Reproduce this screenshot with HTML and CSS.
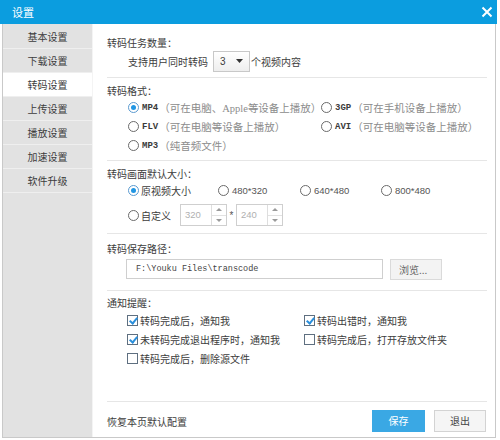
FILE: index.html
```html
<!DOCTYPE html>
<html lang="zh">
<head>
<meta charset="utf-8">
<title>设置</title>
<link rel="stylesheet" href="styles.css">
</head>
<body>
<div class="window">
  <div class="titlebar">
    <span class="title">设置</span>
    <svg class="close" width="12" height="12" viewBox="0 0 12 12"><path d="M1.5 1.5 L10.5 10.5 M10.5 1.5 L1.5 10.5" stroke="#fff" stroke-width="2" fill="none"/></svg>
  </div>
  <div class="frame">
    <ul class="sidebar">
      <li>基本设置</li>
      <li>下载设置</li>
      <li class="active">转码设置</li>
      <li>上传设置</li>
      <li>播放设置</li>
      <li>加速设置</li>
      <li>软件升级</li>
    </ul>
    <div class="content">
      <section class="sec s1">
        <div class="sec-title">转码任务数量：</div>
        <div class="task-row">
          <span>支持用户同时转码</span>
          <span class="select"><span class="sel-val">3</span><svg width="7" height="4" viewBox="0 0 7 4"><path d="M0 0 H7 L3.5 4 Z" fill="#333"/></svg></span>
          <span>个视频内容</span>
        </div>
      </section>

      <section class="sec s2">
        <div class="sec-title">转码格式：</div>
        <div class="fmt-grid">
          <label class="opt"><span class="radio checked"></span><span class="fmt">MP4</span><span class="desc">（可在电脑、<span class="latin">Apple</span>等设备上播放）</span></label>
          <label class="opt"><span class="radio"></span><span class="fmt">3GP</span><span class="desc">（可在手机设备上播放）</span></label>
          <label class="opt"><span class="radio"></span><span class="fmt">FLV</span><span class="desc">（可在电脑等设备上播放）</span></label>
          <label class="opt"><span class="radio"></span><span class="fmt">AVI</span><span class="desc">（可在电脑等设备上播放）</span></label>
          <label class="opt"><span class="radio"></span><span class="fmt">MP3</span><span class="desc">（纯音频文件）</span></label>
        </div>
      </section>

      <section class="sec s3">
        <div class="sec-title">转码画面默认大小：</div>
        <div class="size-row">
          <label class="opt w1"><span class="radio checked"></span><span>原视频大小</span></label>
          <label class="opt w2"><span class="radio"></span><span class="num">480*320</span></label>
          <label class="opt w3"><span class="radio"></span><span class="num">640*480</span></label>
          <label class="opt"><span class="radio"></span><span class="num">800*480</span></label>
        </div>
        <div class="custom-row">
          <label class="opt w-custom"><span class="radio"></span><span>自定义</span></label>
          <span class="spin"><span class="spin-val">320</span><span class="spin-arrows"><span class="up"></span><span class="down"></span></span></span>
          <span class="times">*</span>
          <span class="spin"><span class="spin-val">240</span><span class="spin-arrows"><span class="up"></span><span class="down"></span></span></span>
        </div>
      </section>

      <section class="sec s4">
        <div class="sec-title">转码保存路径：</div>
        <div class="path-row">
          <span class="path-input">F:\Youku Files\transcode</span>
          <span class="btn-browse">浏览...</span>
        </div>
      </section>

      <section class="sec s5">
        <div class="sec-title">通知提醒：</div>
        <div class="chk-grid">
          <label class="opt"><span class="check checked"></span><span>转码完成后，通知我</span></label>
          <label class="opt"><span class="check checked"></span><span>转码出错时，通知我</span></label>
          <label class="opt"><span class="check checked"></span><span>未转码完成退出程序时，通知我</span></label>
          <label class="opt"><span class="check"></span><span>转码完成后，打开存放文件夹</span></label>
          <label class="opt"><span class="check"></span><span>转码完成后，删除源文件</span></label>
        </div>
      </section>

      <div class="footer">
        <span class="restore">恢复本页默认配置</span>
        <div class="buttons">
          <span class="btn btn-primary">保存</span>
          <span class="btn btn-default">退出</span>
        </div>
      </div>
    </div>
  </div>
</div>
</body>
</html>
```

FILE: styles.css
```css
* { box-sizing: border-box; }
html, body { margin: 0; padding: 0; background: #fff; }
body {
  font-family: "Noto Sans CJK SC", "Noto Sans", sans-serif;
  font-size: 10px;
  color: #3c3c3c;
}
.window { width: 497px; }
.titlebar {
  height: 24px;
  background: #0b9ddf;
  display: flex;
  align-items: center;
  justify-content: space-between;
  padding: 0 4px 0 12px;
  color: #fff;
  font-size: 11px;
}
.close { display: block; }
.frame {
  margin-left: 2px;
  width: 494px;
  height: 414px;
  border-left: 1px solid #c9c9c9;
  border-right: 1px solid #c9c9c9;
  border-bottom: 1px solid #c9c9c9;
  display: flex;
}
.sidebar {
  list-style: none;
  margin: 0;
  padding: 1px 0 0;
  width: 90px;
  background: #e2e2e2;
  border-right: 1px solid #f4f4f4;
}
.sidebar li {
  height: 24px;
  line-height: 23px;
  text-align: center;
  border-bottom: 1px solid #efefef;
  color: #3c3c3c;
}
.sidebar li.active { background: #fff; }
.content {
  flex: 1;
  padding: 0 8px 0 14px;
  display: flex;
  flex-direction: column;
}
.sec { border-bottom: 1px solid #e6e6e6; }
.sec-title { line-height: 14px; height: 14px; }
.opt { display: flex; align-items: center; white-space: nowrap; }

.radio {
  width: 11px; height: 11px;
  border: 1px solid #6a6a6a;
  border-radius: 50%;
  margin-right: 2px;
  display: inline-flex;
  align-items: center;
  justify-content: center;
  background: #fff;
  flex: none;
}
.radio.checked { border-color: #5a9ad0; }
.radio.checked::after {
  content: "";
  width: 5px; height: 5px;
  border-radius: 50%;
  background: #2196e3;
}
.check {
  width: 11px; height: 11px;
  border: 1px solid #5e6f80;
  margin-right: 2px;
  flex: none;
  background: #fff;
  position: relative;
}
.check.checked::after {
  content: "";
  position: absolute;
  left: 3px; top: 0px;
  width: 3px; height: 6px;
  border-right: 2px solid #2a8fdc;
  border-bottom: 2px solid #2a8fdc;
  transform: rotate(40deg);
}

/* section 1 */
.s1 { padding: 12px 0 5px; }
.task-row {
  height: 22px;
  display: flex;
  align-items: center;
  padding-left: 21px;
}
.select {
  width: 37px; height: 21px;
  margin: 0 1px 0 5px;
  border: 1px solid #c8c8c8;
  background: linear-gradient(#ffffff, #eeeeee);
  display: flex;
  align-items: center;
  justify-content: space-between;
  padding: 0 6px 0 6px;
}
.sel-val { font-family: "Liberation Sans", sans-serif; font-size: 10px; }

/* section 2 */
.s2 { padding: 6px 0 5px; }
.fmt-grid {
  display: grid;
  grid-template-columns: 193px auto;
  grid-auto-rows: 19px;
  padding-left: 21px;
}
.fmt {
  font-family: "Liberation Mono", monospace;
  font-weight: bold;
  font-size: 9px;
  color: #3a3a3a;
  margin-left: 1px;
}
.desc { color: #8c8c8c; font-size: 10.5px; margin-left: 1px; }
.latin { font-family: "Liberation Serif", serif; font-size: 10.5px; }

/* section 3 */
.s3 { padding: 6px 0 7px; }
.size-row {
  height: 18px;
  display: flex;
  align-items: center;
  padding-left: 21px;
}
.w1 { width: 90px; }
.w2 { width: 82px; }
.w3 { width: 81px; }
.num { font-family: "Liberation Sans", sans-serif; font-size: 9.5px; color: #555; margin-left: 1px; }
.custom-row {
  margin-top: 5px;
  height: 22px;
  display: flex;
  align-items: center;
  padding-left: 21px;
}
.w-custom { width: 52px; }
.spin {
  width: 47px; height: 22px;
  border: 1px solid #cfcfcf;
  display: flex;
  background: #fff;
}
.spin-val {
  flex: 1;
  padding-left: 4px;
  line-height: 20px;
  font-family: "Liberation Sans", sans-serif;
  font-size: 9.5px;
  color: #b0b0b0;
}
.spin-arrows {
  width: 15px;
  border-left: 1px solid #dedede;
  display: flex;
  flex-direction: column;
}
.spin-arrows span {
  flex: 1;
  display: flex;
  align-items: center;
  justify-content: center;
}
.spin-arrows .up { border-bottom: 1px solid #e2e2e2; }
.spin-arrows .up::after {
  content: "";
  border-left: 3px solid transparent;
  border-right: 3px solid transparent;
  border-bottom: 3px solid #9a9a9a;
}
.spin-arrows .down::after {
  content: "";
  border-left: 3px solid transparent;
  border-right: 3px solid transparent;
  border-top: 3px solid #9a9a9a;
}
.times { width: 9px; text-align: center; font-family: "Liberation Sans", sans-serif; font-size: 10px; color: #555; }

/* section 4 */
.s4 { padding: 8px 0 10px; }
.path-row {
  margin-top: 2px;
  height: 22px;
  display: flex;
  align-items: center;
  padding-left: 19px;
}
.path-input {
  width: 257px; height: 20px;
  border: 1px solid #cfcfcf;
  line-height: 18px;
  padding-left: 9px;
  font-family: "Liberation Mono", monospace;
  font-size: 8.5px;
  color: #444;
}
.btn-browse {
  margin-left: 7px;
  width: 52px; height: 21px;
  border: 1px solid #dadada;
  background: #f3f3f3;
  color: #666;
  line-height: 19px;
  padding-left: 8px;
}

/* section 5 */
.s5 { padding: 5px 0 33px; }
.chk-grid {
  display: grid;
  grid-template-columns: 177px auto;
  grid-auto-rows: 19px;
  padding-left: 20px;
  margin-top: 1px;
}

/* footer */
.footer {
  padding-top: 8px;
  display: flex;
  align-items: center;
  justify-content: space-between;
  height: 30px;
}
.restore { color: #3c3c3c; }
.buttons { display: flex; gap: 9px; padding-right: 1px; }
.btn {
  width: 53px; height: 22px;
  line-height: 20px;
  text-align: center;
  border: 1px solid transparent;
}
.btn-primary { background: #3aa8e4; border-color: #3aa8e4; color: #fff; }
.btn-default { background: #f5f5f5; border-color: #d3d3d3; color: #444; width: 52px; }
```
